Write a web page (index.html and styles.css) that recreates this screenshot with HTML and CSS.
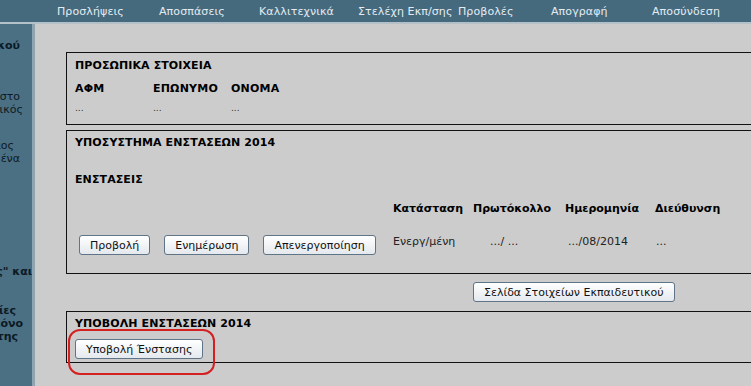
FILE: index.html
```html
<!DOCTYPE html>
<html lang="el">
<head>
    <meta charset="UTF-8">
    <title>Ενστάσεις 2014</title>
    <link rel="stylesheet" href="styles.css">
</head>
<body>
    <div class="topbar">
        <a class="nav">Προσλήψεις</a>
        <a class="nav">Αποσπάσεις</a>
        <a class="nav">Καλλιτεχνικά</a>
        <a class="nav">Στελέχη Εκπ/σης</a>
        <a class="nav">Προβολές</a>
        <a class="nav">Απογραφή</a>
        <a class="nav">Αποσύνδεση</a>
    </div>
    <div class="rule"></div>

    <div class="page">
        <div class="sidebar">
            <div class="grp g1">
                <div class="ln b e12">Στοιχεία Εκπαιδευτικού</div>
            </div>
            <div class="grp g2">
                <div class="ln e12">Ο εκπαιδευτικός στο</div>
                <div class="ln e9">σύστημα ως μόνιμος εκπαιδευτικός</div>
            </div>
            <div class="grp g3">
                <div class="ln e18">υπηρετεί ως μόνιμος</div>
                <div class="ln e12">εκπαιδευτικός σε ένα</div>
            </div>
            <div class="grp g4">
                <div class="ln b e0">"Υποβολή Ένστασης" και</div>
            </div>
            <div class="grp g5">
                <div class="ln b e16">αιτήσεις οι οποίες</div>
                <div class="ln b e9">υποβάλλονται μόνο</div>
                <div class="ln b e14">του εκπαιδευτικού της</div>
            </div>
        </div>

        <div class="main">
            <div class="box box1">
                <div class="title">ΠΡΟΣΩΠΙΚΑ ΣΤΟΙΧΕΙΑ</div>
                <div class="cols heads">
                    <span>ΑΦΜ</span>
                    <span>ΕΠΩΝΥΜΟ</span>
                    <span>ΟΝΟΜΑ</span>
                </div>
                <div class="cols vals">
                    <span>...</span>
                    <span>...</span>
                    <span>...</span>
                </div>
            </div>

            <div class="box box2">
                <div class="title">ΥΠΟΣΥΣΤΗΜΑ ΕΝΣΤΑΣΕΩΝ 2014</div>
                <div class="title sub">ΕΝΣΤΑΣΕΙΣ</div>
                <div class="grid">
                    <div></div>
                    <div class="th">Κατάσταση</div>
                    <div class="th">Πρωτόκολλο</div>
                    <div class="th">Ημερομηνία</div>
                    <div class="th">Διεύθυνση</div>

                    <div class="actions">
                        <button class="btn">Προβολή</button>
                        <button class="btn">Ενημέρωση</button>
                        <button class="btn">Απενεργοποίηση</button>
                    </div>
                    <div class="td">Ενεργ/μένη</div>
                    <div class="td prot">.../ ...</div>
                    <div class="td date">.../08/2014</div>
                    <div class="td dir">...</div>
                </div>
            </div>

            <div class="center-row">
                <button class="btn">Σελίδα Στοιχείων Εκπαιδευτικού</button>
            </div>

            <div class="box box3">
                <div class="title">ΥΠΟΒΟΛΗ ΕΝΣΤΑΣΕΩΝ 2014</div>
                <div class="submit-wrap">
                    <button class="btn">Υποβολή Ένστασης</button>
                    <div class="mark"></div>
                </div>
            </div>
        </div>
    </div>
</body>
</html>
```

FILE: styles.css
```css
body {
    margin: 0;
    padding: 0;
    background-color: #cccccc;
    font-family: "DejaVu Sans", Verdana, sans-serif;
    font-size: 11px;
    color: #000;
    overflow: hidden;
    width: 751px;
    height: 386px;
}
.topbar {
    background-color: #456a7e;
    height: 22px;
    display: grid;
    grid-template-columns: 102px 100px 99px 100px 93px 101px auto;
    align-items: center;
    padding-left: 57px;
    white-space: nowrap;
}
.nav {
    color: #e4ecf2;
    font-family: "DejaVu Sans", sans-serif;
    font-size: 11px;
    letter-spacing: 0.1px;
}
.rule {
    height: 2px;
    background-color: #b4c0c8;
}
.page {
    display: flex;
    height: 362px;
}
.sidebar {
    width: 32px;
    flex: none;
    background-color: #4b6f83;
    border-right: 3px solid #8fa3b0;
    overflow: hidden;
    color: #0b1a24;
}
.grp .ln {
    display: flex;
    justify-content: flex-end;
    white-space: nowrap;
    height: 13px;
    line-height: 13px;
    font-size: 11px;
}
.ln.b { font-weight: bold; }
.e0 { padding-right: 0; }
.e9 { padding-right: 9px; }
.e12 { padding-right: 12px; }
.e14 { padding-right: 14px; }
.e16 { padding-right: 16px; }
.e18 { padding-right: 18px; }
.g1 { margin-top: 15px; }
.g2 { margin-top: 38px; }
.g3 { margin-top: 23px; }
.g4 { margin-top: 100px; }
.g5 { margin-top: 26px; }

.main {
    padding: 28px 0 0 31px;
    flex: none;
    width: 760px;
}
.box {
    border: 1px solid #111;
    padding: 0 8px;
}
.title {
    font-weight: bold;
    font-size: 11px;
    letter-spacing: 0.1px;
}
.box1 {
    height: 71px;
}
.box1 .title {
    margin-top: 6px;
}
.cols {
    display: grid;
    grid-template-columns: 78px 78px auto;
}
.heads {
    margin-top: 10px;
    font-weight: bold;
    letter-spacing: 0.2px;
}
.vals {
    margin-top: 8px;
    font-size: 9px;
    color: #333;
}
.box2 {
    margin-top: 5px;
    height: 142px;
}
.box2 .title {
    margin-top: 5px;
}
.box2 .sub {
    margin-top: 24px;
}
.grid {
    display: grid;
    grid-template-columns: 318px 80px 92px 90px auto;
    grid-template-rows: 20px 46px;
    margin-top: 12px;
    align-items: center;
}
.th {
    font-weight: bold;
    letter-spacing: 0;
}
.td {
    color: #222;
}
.prot { padding-left: 17px; }
.date { padding-left: 3px; }
.dir { padding-left: 1px; }
.actions {
    display: flex;
    gap: 14px;
    padding-left: 4px;
    padding-top: 8px;
}
.btn {
    font-family: "DejaVu Sans", Verdana, sans-serif;
    font-size: 11px;
    color: #111;
    background: linear-gradient(#ffffff, #e4e9ee);
    border: 1px solid #5f7486;
    border-radius: 3px;
    height: 20px;
    padding: 0 10px;
    margin: 0;
}
.center-row {
    padding-left: 407px;
    margin-top: 8px;
    height: 29px;
}
.box3 {
    height: 50px;
}
.box3 .title {
    margin-top: 5px;
}
.submit-wrap {
    position: relative;
    margin-top: 9px;
}
.mark {
    position: absolute;
    left: -7px;
    top: -10px;
    width: 143px;
    height: 42px;
    border: 2px solid #d42020;
    border-radius: 12px;
}
```
